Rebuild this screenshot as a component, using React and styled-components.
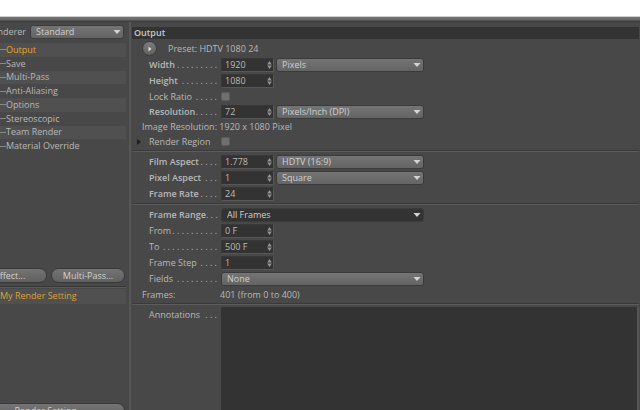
import { useState } from "react";
import styled, { createGlobalStyle } from "styled-components";


const settings = ["Output", "Save", "Multi-Pass", "Anti-Aliasing", "Options", "Stereoscopic", "Team Render", "Material Override"];


function Label({ id, bold, dots = 0, children }) {
    return (
        <LabelBox htmlFor={id} $bold={bold}>
            <span>{children}</span>
            <Leader aria-hidden="true">{Array(dots).fill(".").join(" ")}</Leader>
        </LabelBox>
    )
}

function NumberField({ id, initial }) {
    const [value, setValue] = useState(initial);

    return (
        <FieldBox>
            <NumberInput id={id} value={value} onChange={(e) => setValue(e.target.value)} />
            <Spinner viewBox="0 0 5 8" aria-hidden="true">
                <path d="M2.5 0 L4.8 3.4 H0.2 Z M2.5 8 L4.8 4.6 H0.2 Z" />
            </Spinner>
        </FieldBox>
    )
}

function Dropdown({ id, label, options, size, dark }) {
    return (
        <SelectBox $size={size}>
            <Select id={id} aria-label={label} $dark={dark}>
                {options.map((option) => <option key={option}>{option}</option>)}
            </Select>
            <Arrow viewBox="0 0 8 4" aria-hidden="true">
                <path d="M0.5 0 H7.5 L4 4 Z" />
            </Arrow>
        </SelectBox>
    )
}


function Sidebar() {
    const [active, setActive] = useState("Output");

    return (
        <Side>
            <SideContent>
                <RendererRow>
                    <label htmlFor="renderer">Renderer</label>
                    <Dropdown id="renderer" size="94px" options={["Standard", "Physical"]} />
                </RendererRow>
                <Tree>
                    {settings.map((name) => (
                        <TreeItem key={name}>
                            <TreeButton $active={name === active} onClick={() => setActive(name)}>{name}</TreeButton>
                        </TreeItem>
                    ))}
                </Tree>
                <ButtonRow>
                    <Button>Effect...</Button>
                    <Button>Multi-Pass...</Button>
                </ButtonRow>
                <SideRule />
                <Presets>
                    <PresetItem>My Render Setting</PresetItem>
                </Presets>
                <ButtonRow>
                    <Button>Render Setting...</Button>
                </ButtonRow>
            </SideContent>
        </Side>
    )
}


function OutputPanel() {
    return (
        <Panel>
            <Title>Output</Title>
            <PresetRow>
                <PresetButton aria-label="Choose preset">
                    <svg viewBox="0 0 4 6" width="4" height="6"><path d="M0.5 0.5 L3.5 3 L0.5 5.5 Z" fill="#e0e0e0" /></svg>
                </PresetButton>
                <span>Preset: HDTV 1080 24</span>
            </PresetRow>
            <Row>
                <Label id="width" bold dots={9}>Width</Label>
                <NumberField id="width" initial="1920" />
                <Dropdown label="Size unit" options={["Pixels", "cm", "Inches"]} />
            </Row>
            <Row>
                <Label id="height" bold dots={8}>Height</Label>
                <NumberField id="height" initial="1080" />
            </Row>
            <Row $compact>
                <Label id="lock" dots={5}>Lock Ratio</Label>
                <Checkbox id="lock" type="checkbox" />
            </Row>
            <Row $compact>
                <Label id="resolution" bold dots={5}>Resolution</Label>
                <NumberField id="resolution" initial="72" />
                <Dropdown label="Resolution unit" options={["Pixels/Inch (DPI)", "Pixels/cm"]} />
            </Row>
            <Info>Image Resolution: 1920 x 1080 Pixel</Info>
            <Row $compact $expandable>
                <Expander aria-label="Expand render region">
                    <svg viewBox="0 0 4 6" width="4" height="6"><path d="M0 0 L4 3 L0 6 Z" fill="#1e1e1e" /></svg>
                </Expander>
                <Label id="region">Render Region</Label>
                <Checkbox id="region" type="checkbox" />
            </Row>
            <Rule />
            <Row>
                <Label id="film" bold dots={4}>Film Aspect</Label>
                <NumberField id="film" initial="1.778" />
                <Dropdown label="Film aspect preset" options={["HDTV (16:9)", "Standard (4:3)"]} />
            </Row>
            <Row>
                <Label id="pixel" bold dots={3}>Pixel Aspect</Label>
                <NumberField id="pixel" initial="1" />
                <Dropdown label="Pixel aspect preset" options={["Square", "Custom"]} />
            </Row>
            <Row>
                <Label id="rate" bold dots={4}>Frame Rate</Label>
                <NumberField id="rate" initial="24" />
            </Row>
            <Rule />
            <Row>
                <Label id="range" bold dots={3}>Frame Range</Label>
                <Dropdown id="range" size="203px" dark options={["All Frames", "Current Frame", "Manual"]} />
            </Row>
            <Row>
                <Label id="from" dots={10}>From</Label>
                <NumberField id="from" initial="0 F" />
            </Row>
            <Row>
                <Label id="to" dots={12}>To</Label>
                <NumberField id="to" initial="500 F" />
            </Row>
            <Row>
                <Label id="step" dots={4}>Frame Step</Label>
                <NumberField id="step" initial="1" />
            </Row>
            <Row>
                <Label id="fields" dots={9}>Fields</Label>
                <Dropdown id="fields" size="203px" options={["None", "Even First", "Odd First"]} />
            </Row>
            <Info>
                <InfoName>Frames:</InfoName>
                <span>401 (from 0 to 400)</span>
            </Info>
            <Rule />
            <NotesRow>
                <Label id="notes" dots={3}>Annotations</Label>
                <Notes id="notes" />
            </NotesRow>
        </Panel>
    )
}


function App() {
    return (
        <>
            <GlobalStyle />
            <Page>
                <Window>
                    <Sidebar />
                    <OutputPanel />
                </Window>
            </Page>
        </>
    )
}

export default App;


const GlobalStyle = createGlobalStyle`
    * {
        box-sizing: border-box;
    }

    body {
        margin: 0;
        background: #fff;
        color: #b8b8b8;
        font-family: "Open Sans", "Noto Sans", sans-serif;
        font-size: 9px;
        font-weight: 500;
        line-height: 12px;
        overflow: hidden;
    }

    button, input, select, textarea {
        margin: 0;
        font: inherit;
        color: inherit;
    }

    svg {
        display: block;
    }
`

const Page = styled.div`
    display: flex;
    flex-direction: column;
    height: 100vh;
    padding-top: 16px;
`

const Window = styled.main`
    flex: 1;
    min-height: 0;
    display: flex;
    overflow: hidden;
    padding-top: 5px;
    border-top: 1px solid #cfcfcf;
    background: linear-gradient(#777 0, #666 3px, #3e3e3e 4px, #484848 6px) #484848;
`

const Side = styled.aside`
    flex: none;
    width: 129px;
    overflow: hidden;
`

/* the pane is scrolled a little to the right */
const SideContent = styled.div`
    display: flex;
    flex-direction: column;
    margin-left: -27px;
    padding-right: 3px;
`

const RendererRow = styled.div`
    display: flex;
    align-items: center;
    justify-content: flex-end;
    gap: 4px;
    height: 20px;
    padding-right: 2px;
`

const Tree = styled.ul`
    display: grid;
    grid-template-rows: repeat(8, 1fr);
    height: 110px;
    margin: 1px 0 115px;
    padding: 0;
    list-style: none;
`

const TreeItem = styled.li`
    display: flex;
    padding-left: 27px;

    &:nth-child(odd) {
        background: #505050;
    }
`

const TreeButton = styled.button`
    display: flex;
    align-items: center;
    padding: 0;
    border: 0;
    background: none;
    color: ${props => props.$active ? '#eda41f' : '#b8b8b8'};

    &:before {
        content: "";
        width: 6px;
        height: 1px;
        background: #8a8a8a;
    }
`

const ButtonRow = styled.div`
    display: flex;
    gap: 4px;
    padding-right: 1px;
`

const Button = styled.button`
    flex: 1;
    height: 15px;
    padding: 0;
    border: 1px solid #393939;
    border-radius: 8px;
    background: linear-gradient(#747474, #606060);
    color: #d0d0d0;
    line-height: 12px;
`

const SideRule = styled.div`
    height: 2px;
    margin: 3px 0 1px;
    border-top: 1px solid #383838;
    border-bottom: 1px solid #5a5a5a;
`

const Presets = styled.ul`
    height: 114px;
    margin: 0;
    padding: 0;
    list-style: none;
`

const PresetItem = styled.li`
    padding: 1px 0 2px 27px;
    background: #505050;
    color: #dca03a;
`

const Panel = styled.section`
    flex: 1;
    min-width: 0;
    display: flex;
    flex-direction: column;
    padding: 5px 1px 0;
    border-left: 2px solid #575757;
`

const Title = styled.h1`
    flex: none;
    height: 12px;
    margin: 0;
    padding-left: 2px;
    background: #333;
    color: #c8c8c8;
    font-size: 9px;
    font-weight: 600;
    line-height: 12px;
`

const PresetRow = styled.div`
    flex: none;
    display: flex;
    align-items: center;
    gap: 11px;
    height: 18px;
    padding: 1px 0 0 10px;
`

const PresetButton = styled.button`
    display: flex;
    align-items: center;
    justify-content: center;
    width: 15px;
    height: 15px;
    padding: 0;
    border: 1px solid #3c3c3c;
    border-radius: 50%;
    background: linear-gradient(#7c7c7c, #606060);
`

const Row = styled.div`
    flex: none;
    display: flex;
    align-items: center;
    height: ${props => props.$compact ? '15px' : '16px'};
    padding-left: ${props => props.$expandable ? '5px' : '17px'};
`

const LabelBox = styled.label`
    flex: none;
    display: flex;
    justify-content: space-between;
    width: 72px;
    height: 12px;
    padding-right: 4px;
    font-weight: ${props => props.$bold ? 600 : 500};
    white-space: nowrap;
`

const Leader = styled.span`
    font-weight: 400;
`

const FieldBox = styled.div`
    display: grid;
    align-items: center;
    width: 53px;
    margin-right: 2px;
`

const NumberInput = styled.input`
    grid-area: 1 / 1;
    width: 100%;
    height: 14px;
    padding: 0 10px 1px 3px;
    border: 1px solid;
    border-color: #383838 #575757 #575757 #383838;
    background: #333;
    color: #bcbcbc;
    line-height: 12px;
`

const Spinner = styled.svg`
    grid-area: 1 / 1;
    justify-self: end;
    width: 5px;
    height: 8px;
    margin-right: 2px;
    fill: #949494;
    pointer-events: none;
`

const SelectBox = styled.div`
    display: grid;
    align-items: center;
    width: ${props => props.$size || '148px'};
`

const Select = styled.select`
    grid-area: 1 / 1;
    appearance: none;
    width: 100%;
    height: 14px;
    padding: 0 14px 0 5px;
    border: 1px solid #3b3b3b;
    border-radius: 3px;
    background: ${props => props.$dark ? '#333' : 'linear-gradient(#747474, #646464)'};
    color: #d0d0d0;
    line-height: 12px;
`

const Arrow = styled.svg`
    grid-area: 1 / 1;
    justify-self: end;
    width: 8px;
    height: 4px;
    margin-right: 3px;
    fill: #d4d4d4;
    pointer-events: none;
`

const Checkbox = styled.input`
    appearance: none;
    width: 9px;
    height: 9px;
    border: 1px solid #5c5c5c;
    border-radius: 2px;
    background: #707070;

    &:checked {
        background: #c0c0c0;
    }
`

const Expander = styled.button`
    width: 12px;
    padding: 0;
    border: 0;
    background: none;
`

const Info = styled.div`
    flex: none;
    display: flex;
    align-items: center;
    height: 15px;
    padding-left: 10px;
`

const InfoName = styled.span`
    width: 78px;
`

const Rule = styled.hr`
    flex: none;
    height: 2px;
    margin: 1px 0 2px;
    border: 0;
    border-top: 1px solid #3a3a3a;
    border-bottom: 1px solid #5c5c5c;
`

const NotesRow = styled.div`
    flex: 1;
    min-height: 0;
    display: flex;
    padding-left: 17px;

    label {
        margin-top: 2px;
    }
`

const Notes = styled.textarea`
    flex: 1;
    min-width: 0;
    padding: 2px 4px;
    border: 0;
    border-right: 2px solid #555;
    background: #333;
    resize: none;
`
